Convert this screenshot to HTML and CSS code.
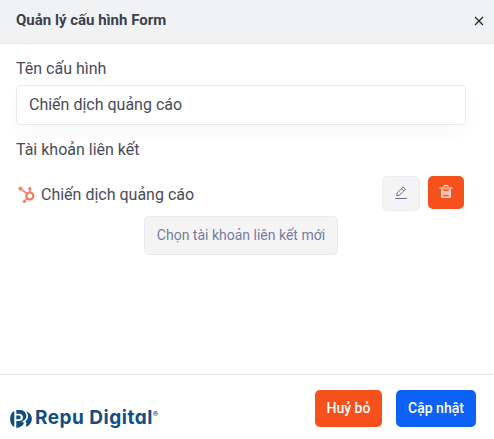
FILE: index.html
```html
<!DOCTYPE html>
<html lang="vi">
<head>
<meta charset="utf-8">
<title>Quản lý cấu hình Form</title>
<link rel="stylesheet" href="styles.css">
</head>
<body>
<div class="modal">
  <header class="modal-header">
    <h1 class="modal-title">Quản lý cấu hình Form</h1>
    <svg class="close" viewBox="0 0 10 10" width="10" height="10"><path d="M1 1l8 8M9 1L1 9"/></svg>
  </header>
  <main class="modal-body">
    <div class="label">Tên cấu hình</div>
    <div class="input">Chiến dịch quảng cáo</div>
    <div class="label label-account">Tài khoản liên kết</div>
    <div class="account">
      <svg class="hubspot" viewBox="0 0 18 18" width="18" height="18">
        <path d="M2.6 2.8l6.6 4.9M11.8 3v4M9.3 12.2l-2.6 2.8"/>
        <circle class="ring" cx="11.8" cy="10" r="3.5"/>
        <circle class="dot" cx="2.4" cy="2.6" r="1.9"/>
        <circle class="dot" cx="11.8" cy="2.7" r="1.6"/>
        <circle class="dot" cx="6.3" cy="15.5" r="1.6"/>
      </svg>
      <span class="account-name">Chiến dịch quảng cáo</span>
      <div class="btn btn-edit">
        <svg viewBox="0 0 12 13" width="12" height="13"><path d="M.3 12.5h11.4M1.7 9.8l.6-2.9L8.2 1l2.2 2.2-5.9 5.9zM6.6 2.6l2.2 2.2"/></svg>
      </div>
      <div class="btn btn-delete">
        <svg viewBox="0 0 14 13" width="14" height="13"><path d="M.5 3h13M5 2.5v-2h4v2"/><path class="fill" d="M2.5 4.5h9v7h-9z"/><path d="M2.7 4v8.3h8.6V4"/><path class="slot" d="M4.5 5.5h5M4.5 10.5h5"/></svg>
      </div>
    </div>
    <div class="btn btn-choose">Chọn tài khoản liên kết mới</div>
  </main>
  <footer class="modal-footer">
    <div class="brand">
      <svg viewBox="0 0 22 18" width="22" height="18">
        <path d="M4.3 1C-1.3 3.7-1.3 14.3 4.3 17z"/>
        <path d="M6.3 0h3.6c8 0 8.4 10.3 2.2 11l1.9 2.6c-1.5 2.6-4 4.2-7.7 4.4v-6.9h2.9c5 0 5-7.4 0-7.4H6.3z"/>
        <path d="M6.3 5.6H9c2.2 0 2.2 3.6 0 3.6H6.3z"/>
        <path d="M16 1.2c7.6 2.4 7.9 11.7.7 15.6l-1-1.5 1-2-1.4-1.9C18.8 9 18.9 4.5 16 1.2z"/>
      </svg>
      <span class="brand-name">Repu Digital</span><span class="reg">®</span>
    </div>
    <div class="btn btn-cancel">Huỷ bỏ</div>
    <div class="btn btn-update">Cập nhật</div>
  </footer>
</div>
</body>
</html>
```
FILE: styles.css
```css
* { box-sizing: border-box; }
body {
  margin: 0;
  background: #fff;
  color: #464c59;
  font: 16px/24px Roboto, "Liberation Sans", sans-serif;
}
.modal { display: flex; flex-direction: column; height: 439px; overflow: hidden; }
.modal-header {
  display: flex; justify-content: space-between; align-items: center;
  height: 44px; padding: 0 10px 1px 16px;
  background: #f1f2f4; border-bottom: 1px solid #e7e9ec;
}
.modal-title { margin: -2px 0 0; font-size: 15px; line-height: 20px; font-weight: 700; color: #3b404b; }
.close { fill: none; stroke: #222; stroke-width: 1.2; }
.modal-body { flex: 1; display: flex; flex-direction: column; padding: 13px 28px 0 16px; }
.label { height: 24px; }
.input {
  height: 40px; margin-top: 4px; padding: 7px 12px;
  border: 1px solid #e6e8f0; border-radius: 4px;
  box-shadow: 0 8px 16px rgba(20, 70, 60, .03);
}
.label-account { margin-top: 13px; }
.account { display: flex; align-items: flex-start; height: 40px; margin-top: 14px; padding-right: 2px; }
.hubspot { margin: 10px 5px 0 2px; fill: none; stroke: #f8795f; stroke-width: 1.5; }
.hubspot .ring { stroke-width: 2.2; }
.hubspot .dot { fill: #f8795f; stroke: none; }
.account-name { flex: 1; padding-top: 7px; }
.btn {
  display: flex; align-items: center; justify-content: center;
  border-radius: 5px; font-size: 14px; font-weight: 500; color: #fff;
}
.btn svg { fill: none; stroke: currentColor; }
.btn-edit {
  width: 38px; height: 35px; padding-bottom: 3px; margin-right: 8px;
  background: #f4f4f5; border: 1px solid #ebecf0; color: #686c94;
}
.btn-delete { width: 36px; height: 33px; padding-bottom: 3px; background: #f6511d; }
.btn-delete .fill { fill: #fdb9a3; stroke: none; }
.btn-delete .slot { stroke: #f6511d; }
.btn-choose {
  align-self: flex-start; width: 194px; height: 39px; margin-left: 128px; padding-bottom: 2px;
  background: #f4f4f5; border: 1px solid #e9eaf0; color: #777ba0; font-weight: 400;
}
.modal-footer {
  display: flex; height: 65px; padding: 15px 18px 0 10px;
  border-top: 1px solid #e8e9eb;
}
.brand { display: flex; flex: 1; align-items: flex-start; color: #134e82; padding-top: 15px; }
.brand svg { margin-top: 5px; fill: currentColor; }
.brand-name {
  margin: 1px 0 0 3px; font: 700 19px/24px Inter, sans-serif; letter-spacing: .5px;
  font-feature-settings: "cv11"; white-space: nowrap;
}
.reg { font: 700 8px/10px Inter, sans-serif; margin-top: 4px; }
.btn-cancel { width: 67px; height: 37px; margin-right: 14px; padding-bottom: 2px; background: #f6511d; }
.btn-update { width: 80px; height: 37px; padding-bottom: 2px; background: #0d62f5; }
```
